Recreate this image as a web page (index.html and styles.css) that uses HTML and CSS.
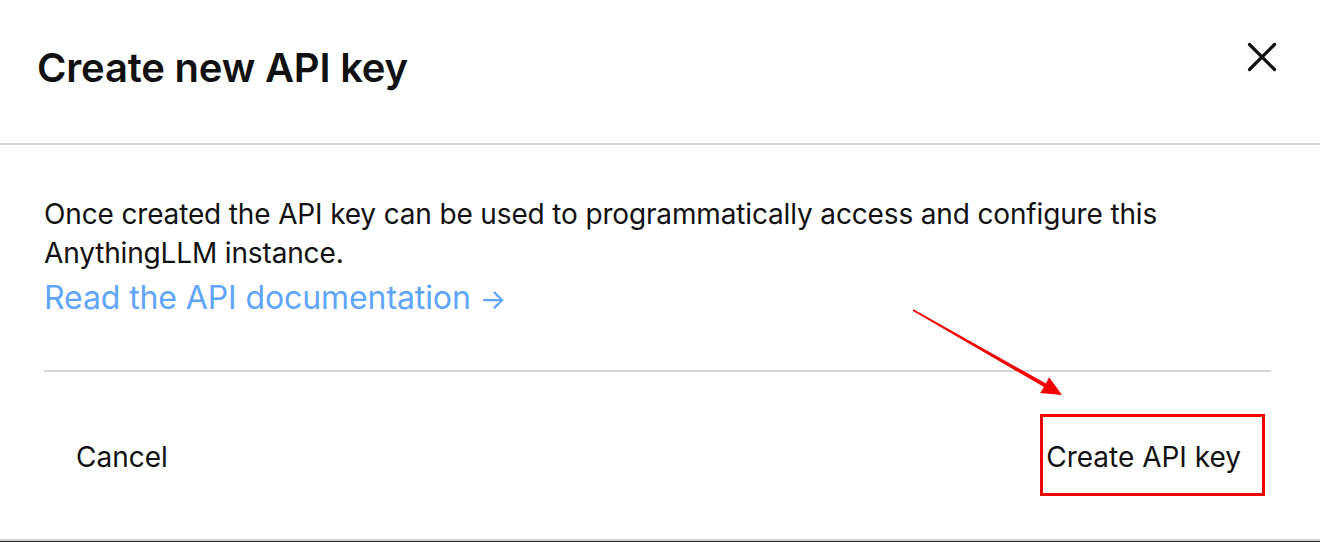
FILE: index.html
```html
<!DOCTYPE html>
<html lang="en">
<head>
<meta charset="utf-8">
<title>Create new API key</title>
<link rel="stylesheet" href="styles.css">
</head>
<body>
<div class="modal">
  <header class="modal-header">
    <h1 class="modal-title">Create new API key</h1>
    <button class="close-btn" aria-label="Close">
      <svg width="32" height="32" viewBox="0 0 32 32"><path d="M3.5 3.5 L28.5 28.5 M28.5 3.5 L3.5 28.5" stroke="#111" stroke-width="3.2" stroke-linecap="round" fill="none"/></svg>
    </button>
  </header>
  <section class="modal-body">
    <p class="desc">Once created the API key can be used to programmatically access and configure this AnythingLLM instance.</p>
    <a class="doc-link" href="#">Read the API documentation <span class="arrow">→</span></a>
    <div class="divider"></div>
    <div class="modal-footer">
      <button class="btn">Cancel</button>
      <button class="btn">Create API key</button>
    </div>
  </section>
  <div class="highlight-box"></div>
  <svg class="annotation-arrow" width="1320" height="542" viewBox="0 0 1320 542">
    <polygon points="913.4,309.3 1046,383.6 1049.1,377.3 1062,395 1040.1,392.9 1044,387.0 912.6,310.7" fill="#f20000"/>
  </svg>
</div>
</body>
</html>
```

FILE: styles.css
```css
html {
  background: #2a2a2a;
}
body {
  margin: 0;
  font-family: Inter, "Noto Sans", sans-serif;
  color: #111;
}
.modal {
  position: relative;
  height: 539px;
  background: #fff;
  border-bottom: 2px solid #cfcfcf;
}
.modal-header {
  height: 143px;
  border-bottom: 2px solid #d6d6d6;
  display: flex;
  justify-content: space-between;
  align-items: flex-start;
  padding: 0 42px 0 37px;
}
.modal-title {
  margin: 44px 0 0;
  font-size: 40px;
  line-height: 48px;
  font-weight: 600;
  letter-spacing: -0.2px;
}
.close-btn {
  margin-top: 41px;
  padding: 0;
  border: 0;
  background: none;
  width: 32px;
  height: 32px;
}
.close-btn svg {
  display: block;
}
.modal-body {
  padding: 0 49px 0 44px;
}
.desc {
  margin: 50px 0 0;
  font-size: 28px;
  line-height: 39px;
  font-weight: 400;
  letter-spacing: -0.15px;
}
.doc-link {
  display: block;
  margin-top: 5px;
  font-size: 32px;
  line-height: 40px;
  color: #60a5fa;
  text-decoration: none;
  letter-spacing: -0.1px;
}
.doc-link .arrow {
  font-size: 28px;
}
.divider {
  margin-top: 51px;
  height: 2px;
  background: #d6d6d6;
}
.modal-footer {
  display: flex;
  justify-content: space-between;
  padding-top: 65px;
}
.btn {
  border: 0;
  background: none;
  padding: 0 32px;
  font-family: inherit;
  font-size: 28px;
  line-height: 40px;
  color: #111;
}
.btn:last-child {
  padding-right: 30px;
}
.highlight-box {
  position: absolute;
  left: 1040px;
  top: 414px;
  width: 225px;
  height: 82px;
  box-sizing: border-box;
  border: 3px solid #f20000;
}
.annotation-arrow {
  position: absolute;
  left: 0;
  top: 0;
  pointer-events: none;
}
```
